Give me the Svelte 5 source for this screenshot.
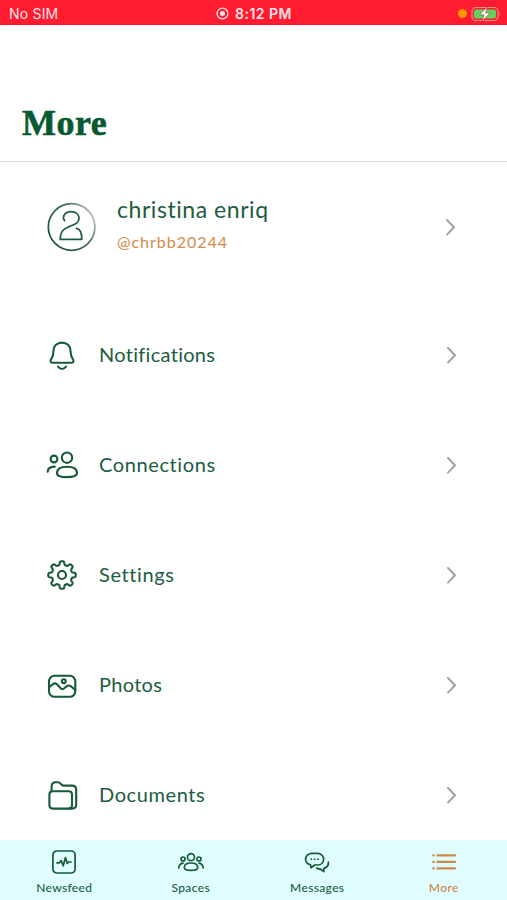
<script>
    const user = { name: 'christina enriq', handle: '@chrbb20244' };

    const menu = [
        { id: 'notifications', label: 'Notifications' },
        { id: 'connections', label: 'Connections' },
        { id: 'settings', label: 'Settings' },
        { id: 'photos', label: 'Photos' },
        { id: 'documents', label: 'Documents' }
    ];

    const tabs = [
        { id: 'newsfeed', label: 'Newsfeed' },
        { id: 'spaces', label: 'Spaces' },
        { id: 'messages', label: 'Messages' },
        { id: 'more', label: 'More' }
    ];

    let active = $state('more');

    // eight rounded teeth around the centre of a 32px box
    function gearPath() {
        let d = '';
        for (let i = 0; i < 240; i++) {
            const a = (i / 240) * Math.PI * 2;
            const r = 12 + 1.75 * Math.tanh(2.2 * Math.cos(8 * a)) / Math.tanh(2.2);
            d += `${i ? 'L' : 'M'}${(16 + r * Math.sin(a)).toFixed(2)} ${(16 - r * Math.cos(a)).toFixed(2)}`;
        }
        return d + 'Z';
    }
</script>

{#snippet chevron()}
    <svg class="chevron" viewBox="0 0 12 18" width="12" height="18">
        <path d="M2 2 L9 9.3 L2 16.6" />
    </svg>
{/snippet}

<div class="screen">
    <div class="status">
        <span class="carrier">No SIM</span>
        <span class="clock">
            <svg width="13" height="13" viewBox="0 0 13 13">
                <circle cx="6.5" cy="6.5" r="5.4" fill="none" stroke="#ffe3e6" stroke-width="1.3" />
                <circle cx="6.5" cy="6.5" r="2.5" fill="#ffe3e6" />
            </svg>
            8:12 PM
        </span>
        <span class="power">
            <i class="dot"></i>
            <svg width="31" height="16" viewBox="0 0 31 16">
                <rect x="1" y="1.5" width="26" height="13" rx="4" fill="none" stroke="#f78a83" stroke-width="1.2" />
                <rect x="3" y="3.5" width="22" height="9" rx="2.2" fill="#62d15f" />
                <path d="M28.6 5.8 Q30.4 8 28.6 10.2 Z" fill="#f78a83" />
                <path d="M16.2 1 L8.6 8.8 H13 L11.2 15 L19.2 6.9 H14.7 Z" fill="#fff" stroke="#9b5a41" stroke-width=".7" />
            </svg>
        </span>
    </div>

    <header>
        <h1>More</h1>
    </header>

    <main>
        <div class="profile">
            <svg class="avatar" viewBox="0 0 50 50" width="50" height="50">
                <defs>
                    <linearGradient id="ring" x1="0" y1="0.8" x2="1" y2="0.2">
                        <stop offset="0" stop-color="#0d5434" />
                        <stop offset="0.65" stop-color="#4d6b5d" />
                        <stop offset="1" stop-color="#c3cac6" />
                    </linearGradient>
                </defs>
                <circle cx="24.6" cy="25" r="23.3" stroke="url(#ring)" stroke-width="1.7" />
                <path d="M17.6 18.6 C15 15.5 17 9.6 24.2 9.6 C29.5 9.6 32.2 13 32 16.8 C31.7 20.8 28.5 22 24 23.8 C16.5 26.8 13.2 29.5 13.2 37.4 H34.8 C35 32 34.2 27.5 29.5 26.4" stroke="#1c5d3f" stroke-width="1.7" />
            </svg>
            <div class="who">
                <span class="name">{user.name}</span>
                <span class="handle">{user.handle}</span>
            </div>
            {@render chevron()}
        </div>

        {#each menu as item (item.id)}
            <div class="row">
                <svg class="icon" viewBox="0 0 32 32" width="32" height="32">
                    {#if item.id === 'notifications'}
                        <path d="M16 3.6 C11 3.6 7.8 7 7.5 11.5 C7.2 16.5 7 17.5 5.4 19.6 C3.8 21.8 4.4 23.8 7 23.8 H25 C27.6 23.8 28.2 21.8 26.6 19.6 C25 17.5 24.8 16.5 24.5 11.5 C24.2 7 21 3.6 16 3.6 Z" />
                        <path d="M12 27.6 Q16 32.4 20 27.6" />
                    {:else if item.id === 'connections'}
                        <circle cx="8" cy="10" r="3.4" />
                        <circle cx="21" cy="8.7" r="5.2" />
                        <path d="M11 24 C11 19.5 15.5 17.8 21 17.8 C26.5 17.8 31 19.5 31 24 C31 27 27.5 28.1 21 28.1 C14.5 28.1 11 27 11 24 Z" />
                        <path d="M1.7 22.8 C1.8 19.5 4.5 17.6 8.8 17.6" />
                    {:else if item.id === 'settings'}
                        <path d={gearPath()} />
                        <circle cx="16" cy="16" r="4" />
                    {:else if item.id === 'photos'}
                        <rect x="3" y="6.8" width="26.3" height="21" rx="5.5" />
                        <circle cx="17.8" cy="12.2" r="1.9" />
                        <path d="M3.2 18.2 L6.8 15.2 Q9 13.4 11.2 15.5 L15 19.4 Q16.5 20.8 18.3 19.2 L20.8 17.2 Q22.8 15.7 24.8 17.3 L29 20.6" />
                    {:else}
                        <path d="M3.4 15.5 Q3.4 12.2 6.7 12.2 H22.7 Q26 12.2 26 15.5 V26.3 Q26 29.6 22.7 29.6 H6.7 Q3.4 29.6 3.4 26.3 Z" />
                        <path d="M5.6 12.2 V7.4 Q5.6 3.2 9.8 3.2 H11.5 Q13.6 3.2 14.8 4.8 Q16 6.6 18 6.6 H26 Q30.2 6.6 30.2 10.8 V25.5 Q30.2 29.6 26 29.6 H22.7" />
                    {/if}
                </svg>
                <span class="label {item.id}">{item.label}</span>
                {@render chevron()}
            </div>
        {/each}
    </main>

    <nav>
        {#each tabs as tab (tab.id)}
            <button class="tab" class:active={active === tab.id} onclick={() => (active = tab.id)}>
                <svg viewBox="0 0 28 28" width="28" height="28">
                    {#if tab.id === 'newsfeed'}
                        <rect x="2.9" y="3" width="22.2" height="22" rx="4" />
                        <path d="M7 14.8 H9.4 L11.2 12.6 L13.2 17.8 L15.4 9.6 L17.3 15.5 L18.6 14 H21" />
                    {:else if tab.id === 'spaces'}
                        <circle cx="14" cy="9.2" r="3.5" />
                        <circle cx="6" cy="11" r="2" />
                        <circle cx="22" cy="11" r="2" />
                        <path d="M7.3 19.4 C7.3 16.2 10 15 14 15 C18 15 20.7 16.2 20.7 19.4 C20.7 21.6 18.5 22.4 14 22.4 C9.5 22.4 7.3 21.6 7.3 19.4 Z" />
                        <path d="M1.8 19.8 Q2.2 15.8 6 15.2 M26.2 19.8 Q25.8 15.8 22 15.2" />
                    {:else if tab.id === 'messages'}
                        <path d="M9 5.4 H14.5 C18 5.4 20.6 8 20.6 11.2 C20.6 14.7 18 17 14.5 17 H11.8 L8 19.8 L7.6 16.8 C4.8 16 2.6 14 2.6 11.2 C2.6 8 5.3 5.4 9 5.4 Z" />
                        <path d="M25.4 14 C25.6 17 24 19.6 20.8 20.6 V23.6 L17.3 21 Q15.2 21.2 13.8 20" />
                        <path class="dots" d="M8.4 11.2 h.01 M11.7 11.2 h.01 M15 11.2 h.01" />
                    {:else}
                        <path d="M7.5 7.4 H25 M7.5 13.9 H25 M7.5 20.4 H25 M3.3 7.4 h.4 M3.3 13.9 h.4 M3.3 20.4 h.4" />
                    {/if}
                </svg>
                <span>{tab.label}</span>
            </button>
        {/each}
    </nav>
</div>

<style>
    :global(body) {
        background: #fff;
    }

    .screen {
        display: flex;
        flex-direction: column;
        width: 507px;
        height: 900px;
        overflow: hidden;
        background: #fefffe;
        color: #205c40;
        font-family: Lato, "Open Sans", sans-serif;
        font-variant-ligatures: none;
    }

    svg {
        flex: none;
    }

    .status {
        display: grid;
        grid-template-columns: 1fr auto 1fr;
        align-items: center;
        box-sizing: border-box;
        flex: none;
        height: 25px;
        padding: 2px 5px 0 9px;
        background: #ff1b30;
        color: #ffe3e6;
        font-family: Inter, sans-serif;
        font-size: 14px;
    }

    .carrier {
        letter-spacing: 0.2px;
    }

    .clock {
        display: flex;
        align-items: center;
        gap: 6px;
        margin-right: 3px;
        font-weight: 600;
        letter-spacing: 0.5px;
    }

    .power {
        display: flex;
        align-items: center;
        justify-content: flex-end;
        gap: 4px;
    }

    .dot {
        width: 9px;
        height: 9px;
        border-radius: 50%;
        background: #ff9500;
    }

    header {
        box-sizing: border-box;
        flex: none;
        height: 137px;
        padding: 77px 22px 0;
        border-bottom: 1px solid #d8dbd9;
    }

    h1 {
        margin: 0;
        color: #075a30;
        font-family: "Liberation Serif", serif;
        font-size: 36px;
        font-weight: 700;
        letter-spacing: 0.5px;
        line-height: 42px;
        -webkit-text-stroke: 0.6px #075a30;
    }

    main {
        flex: 1;
        min-height: 0;
        overflow: hidden;
    }

    .profile {
        display: flex;
        align-items: center;
        height: 130px;
        margin-bottom: 8px;
        padding: 0 50.5px 0 47px;
    }

    .avatar,
    .icon,
    .chevron,
    .tab svg {
        fill: none;
        stroke-linecap: round;
        stroke-linejoin: round;
    }

    .who {
        display: flex;
        flex: 1;
        flex-direction: column;
        gap: 7px;
        margin-left: 20px;
        padding-bottom: 7px;
    }

    .name {
        font-size: 23px;
        letter-spacing: 0.55px;
        line-height: 30px;
    }

    .handle {
        color: #d48a4c;
        font-size: 16px;
        letter-spacing: 1px;
        line-height: 22px;
    }

    .row {
        display: flex;
        align-items: center;
        height: 110px;
        padding: 0 49px 0 46px;
    }

    .icon {
        stroke: #155b38;
        stroke-width: 2.1;
    }

    .label {
        flex: 1;
        margin-left: 21px;
        padding-bottom: 2px;
        font-size: 20px;
        letter-spacing: 0.3px;
        line-height: 28px;
    }

    .label.connections,
    .label.settings,
    .label.documents {
        letter-spacing: 0.6px;
    }

    .chevron {
        stroke: #9ba5a1;
        stroke-width: 2;
    }

    nav {
        display: grid;
        grid-template-columns: repeat(4, 1fr);
        flex: none;
        height: 60px;
        padding-left: 1px;
        background: #dffcfe;
    }

    .tab {
        display: flex;
        flex-direction: column;
        align-items: center;
        padding: 8px 0 0;
        border: 0;
        background: none;
        color: #205c40;
        font: 500 12px/18px Lato, sans-serif;
        letter-spacing: 0.35px;
        cursor: pointer;
    }

    .tab svg {
        stroke: #155b38;
        stroke-width: 1.7;
    }

    .tab span {
        margin-top: 3px;
    }

    .tab .dots {
        stroke-width: 1.8;
    }

    .tab.active {
        color: #cf8748;
    }

    .tab.active svg {
        stroke: #cf8748;
        stroke-width: 2.2;
    }
</style>
